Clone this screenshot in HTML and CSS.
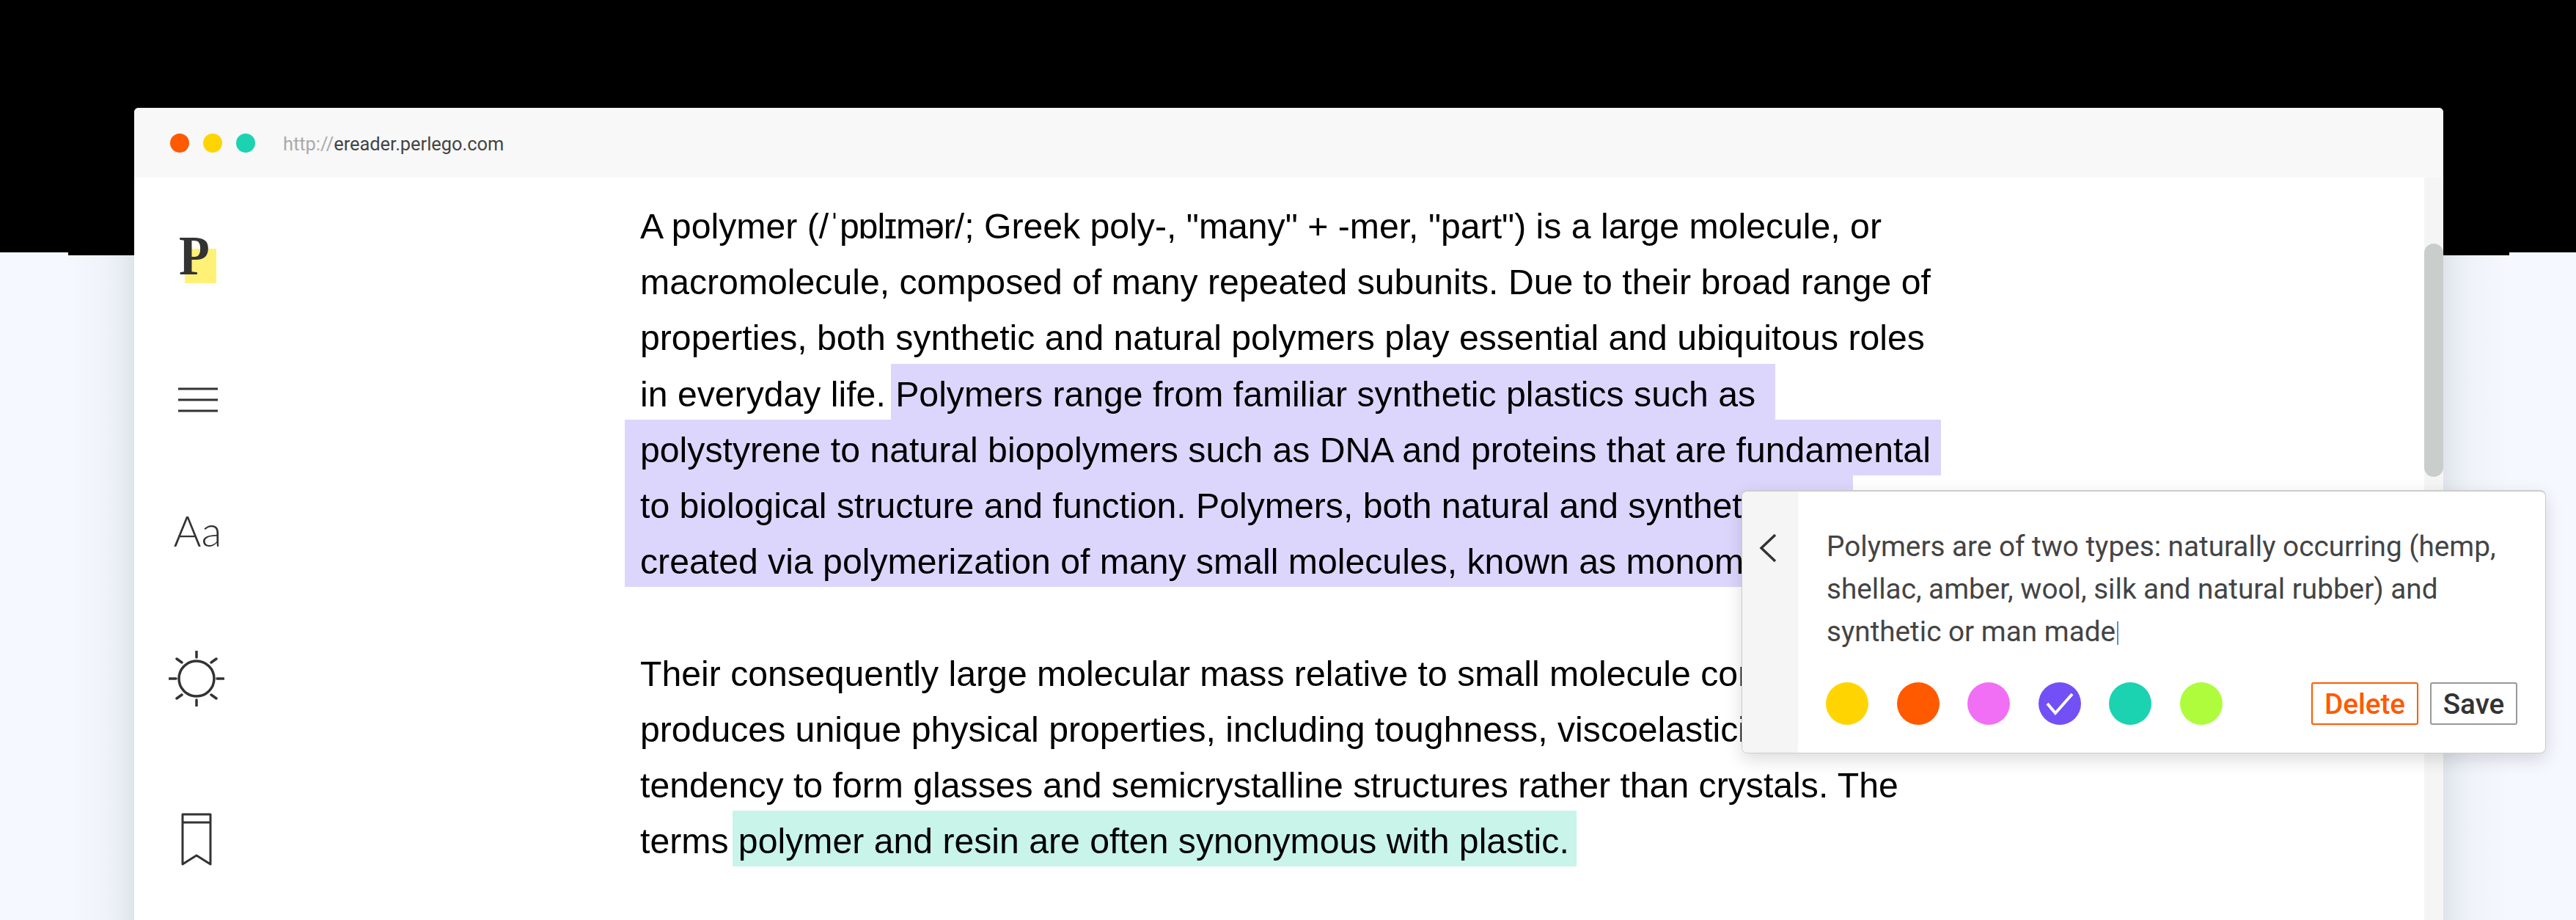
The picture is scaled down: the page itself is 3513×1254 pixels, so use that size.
FILE: index.html
```html
<!DOCTYPE html>
<html lang="en">
  <head>
    <meta charset="UTF-8" />
    <title>Perlego eReader</title>
    <link rel="stylesheet" href="styles.css">
  </head>

  <body>
    <div class="page">
      <div class="window">
        <div class="titlebar">
          <span class="dot dot-red"></span>
          <span class="dot dot-yellow"></span>
          <span class="dot dot-green"></span>
          <span class="url"><span class="url-scheme">http://</span>ereader.perlego.com</span>
        </div>

        <div class="reader">
          <div class="sidebar">
            <div class="logo"><span class="logo-note"></span><span class="logo-letter">P</span></div>
            <svg class="icon-menu" width="54" height="34" viewBox="0 0 54 34">
              <path d="M0 2H54M0 17H54M0 32H54" stroke="#333" stroke-width="3" fill="none" />
            </svg>
            <div class="icon-font">Aa</div>
            <svg class="icon-sun" width="76" height="76" viewBox="0 0 76 76">
              <circle cx="38" cy="38" r="24" stroke="#333" stroke-width="3.5" fill="none" />
              <path d="M38 1V9M38 67V75M1 38H10M66 38H75M11 11L18 16M65 11L58 16M11 65L18 60M65 65L58 60" stroke="#333" stroke-width="3.5" stroke-linecap="round" fill="none" />
            </svg>
            <svg class="icon-bookmark" width="42" height="72" viewBox="0 0 42 72">
              <path d="M2 2H40V70L21 58L2 70ZM2 13H40" stroke="#333" stroke-width="3" stroke-linejoin="round" fill="none" />
            </svg>
          </div>

          <div class="content">
            <div class="line">A polymer (/<span class="ipa">ˈpɒlɪmər</span>/; Greek poly-, "many" + -mer, "part") is a large molecule, or</div>
            <div class="line">macromolecule, composed of many repeated subunits. Due to their broad range of</div>
            <div class="line">properties, both synthetic and natural polymers play essential and ubiquitous roles</div>
            <div class="line">in everyday life. <span class="mark mark-first">Polymers range from familiar synthetic plastics such as</span></div>
            <div class="line"><span class="mark mark-second">polystyrene to natural biopolymers such as DNA and proteins that are fundamental</span></div>
            <div class="line"><span class="mark mark-third">to biological structure and function. Polymers, both natural and synthetic, are</span></div>
            <div class="line"><span class="mark mark-fourth">created via polymerization of many small molecules, known as monomers.</span></div>
            <div class="line"></div>
            <div class="line">Their consequently large molecular mass relative to small molecule compounds</div>
            <div class="line">produces unique physical properties, including toughness, viscoelasticity, and a</div>
            <div class="line">tendency to form glasses and semicrystalline structures rather than crystals. The</div>
            <div class="line">terms <span class="mark-green">polymer and resin are often synonymous with plastic.</span></div>
          </div>

          <div class="scrollbar"><div class="scroll-thumb"></div></div>
        </div>

        <div class="note">
          <div class="note-back">
            <svg width="24" height="40" viewBox="0 0 24 40">
              <path d="M22 2L3 20L22 38" stroke="#333" stroke-width="3.5" fill="none" />
            </svg>
          </div>
          <div class="note-main">
            <div class="note-text">Polymers are of two types: naturally occurring (hemp, shellac, amber, wool, silk and natural rubber) and synthetic or man made<span class="caret"></span></div>
            <div class="note-actions">
              <div class="swatches">
                <span class="swatch swatch-yellow"></span>
                <span class="swatch swatch-orange"></span>
                <span class="swatch swatch-pink"></span>
                <span class="swatch swatch-purple">
                  <svg width="58" height="58" viewBox="0 0 58 58">
                    <path d="M12 29L23 42L46 16" stroke="#fff" stroke-width="4" fill="none" />
                  </svg>
                </span>
                <span class="swatch swatch-teal"></span>
                <span class="swatch swatch-lime"></span>
              </div>
              <button class="btn btn-delete">Delete</button>
              <button class="btn btn-save">Save</button>
            </div>
          </div>
        </div>
      </div>
    </div>
  </body>
</html>
```

FILE: styles.css
```css
body {
  margin: 0;
  background-color: #f5f8ff;
}

.page {
  position: relative;
  height: 1254px;
  padding: 147px 181px 0 183px;
  box-sizing: border-box;
  overflow: hidden;
  background: linear-gradient(#000 344px, #f5f8ff 344px);
}

/* soft shadow either side of the window */
.page::before,
.page::after {
  content: "";
  position: absolute;
  top: 344px;
  bottom: 0;
  width: 90px;
}

.page::before {
  left: 93px;
  background: linear-gradient(#000 4px, transparent 4px),
    linear-gradient(to right, #f5f8ff 0%, #f0f3fa 55%, #e8ecf3 80%, #dfe3ea 100%);
}

.page::after {
  left: 3332px;
  background: linear-gradient(#000 4px, transparent 4px),
    linear-gradient(to left, #f5f8ff 0%, #f0f3fa 55%, #e8ecf3 80%, #dfe3ea 100%);
}

.window {
  position: relative;
  z-index: 1;
  height: 1107px;
  background-color: #fff;
  border-radius: 6px 6px 0 0;
}

.titlebar {
  display: flex;
  align-items: center;
  height: 95px;
  padding-left: 49px;
  background-color: #f8f8f8;
  border-radius: 6px 6px 0 0;
}

.dot {
  width: 26px;
  height: 26px;
  margin-right: 19px;
  border-radius: 50%;
}

.dot-red { background-color: #ff5a00; }
.dot-yellow { background-color: #ffd400; }
.dot-green { background-color: #1bd3b0; }

.url {
  margin-left: 19px;
  padding-top: 2px;
  font-family: Roboto, sans-serif;
  font-size: 25.4px;
  color: #444;
}

.url-scheme {
  color: #aaa;
}

.reader {
  display: flex;
  height: 1012px;
}

.sidebar {
  display: flex;
  flex-direction: column;
  align-items: center;
  flex: none;
  width: 168px;
}

.logo {
  position: relative;
  width: 50px;
  height: 63px;
  margin-top: 81px;
  margin-left: 6px;
}

.logo-note {
  position: absolute;
  left: 7px;
  top: 16px;
  width: 43px;
  height: 47px;
  background-color: #fff176;
}

.logo-letter {
  position: absolute;
  left: -1px;
  top: -13px;
  font-family: "Liberation Serif", serif;
  font-weight: bold;
  font-size: 76px;
  line-height: 76px;
  color: #333;
  transform: scaleX(0.9);
  transform-origin: left;
}

.icon-menu {
  margin-top: 142px;
  margin-left: 6px;
}

.icon-font {
  margin-top: 128px;
  margin-left: 5px;
  font-family: Lato, sans-serif;
  font-weight: 300;
  font-size: 58px;
  line-height: 66px;
  color: #333;
}

.icon-sun {
  margin-top: 131px;
  margin-left: 1px;
}

.icon-bookmark {
  margin-top: 145px;
  margin-left: 1px;
}

.content {
  flex: 1;
  padding: 25px 0 0 522px;
  font-family: "Liberation Sans", Arial, sans-serif;
  font-size: 48.2px;
  color: #000;
}

.line {
  height: 76.2px;
  line-height: 82px;
  white-space: nowrap;
}

.ipa {
  letter-spacing: -1.1px;
}

.mark,
.mark-green {
  display: inline-block;
  box-sizing: border-box;
  height: 76.2px;
  background-color: #dcd6fd;
}

.mark-first {
  width: 1206px;
  margin-left: -6px;
  padding-left: 6px;
}

.mark-second {
  width: 1795px;
  margin-left: -21px;
  padding-left: 21px;
}

.mark-third {
  width: 1675px;
  margin-left: -21px;
  padding-left: 21px;
}

.mark-fourth {
  width: 1600px;
  margin-left: -21px;
  padding-left: 21px;
}

.mark-green {
  width: 1151px;
  margin-left: -8px;
  padding-left: 8px;
  background-color: #c8f4ea;
}

.scrollbar {
  flex: none;
  width: 26px;
  background-color: #f5f5f5;
}

.scroll-thumb {
  height: 318px;
  margin-top: 90px;
  background-color: #c9cdcc;
  border-radius: 13px;
}

.note {
  position: absolute;
  left: 2192px;
  top: 521px;
  display: flex;
  width: 1097px;
  height: 359px;
  box-sizing: border-box;
  background-color: #fff;
  border: 1px solid #ccc;
  border-top-width: 2px;
  border-radius: 8px;
  box-shadow: 0 8px 24px rgba(0, 0, 0, 0.14);
  overflow: hidden;
}

.note-back {
  flex: none;
  width: 76px;
  padding: 57px 0 0 23px;
  box-sizing: border-box;
  background-color: #f5f5f5;
}

.note-main {
  flex: 1;
  padding: 46px 38px 0 39px;
  font-family: Roboto, sans-serif;
}

.note-text {
  height: 214px;
  font-size: 38.7px;
  line-height: 58px;
  color: #444;
}

.caret {
  display: inline-block;
  width: 2px;
  height: 32px;
  margin-left: 2px;
  vertical-align: -5px;
  background-color: #5b8ddf;
}

.note-actions {
  display: flex;
  align-items: center;
}

.swatches {
  display: flex;
  flex: 1;
  gap: 38.6px;
  margin-left: -1px;
}

.swatch {
  display: block;
  width: 58px;
  height: 58px;
  border-radius: 50%;
}

.swatch svg {
  display: block;
}

.swatch-yellow { background-color: #ffd400; }
.swatch-orange { background-color: #ff5a00; }
.swatch-pink { background-color: #f06ff5; }
.swatch-purple { background-color: #7350f5; }
.swatch-teal { background-color: #1bd3b0; }
.swatch-lime { background-color: #aefc3c; }

.btn {
  height: 58px;
  padding: 0;
  font-family: Roboto, sans-serif;
  font-weight: 500;
  font-size: 38.7px;
  background-color: #fff;
  border-radius: 3px;
}

.btn-delete {
  width: 146px;
  margin-right: 16px;
  color: #ff5a00;
  border: 2px solid #ff5a00;
}

.btn-save {
  width: 119px;
  color: #333;
  border: 2px solid #999;
}
```
